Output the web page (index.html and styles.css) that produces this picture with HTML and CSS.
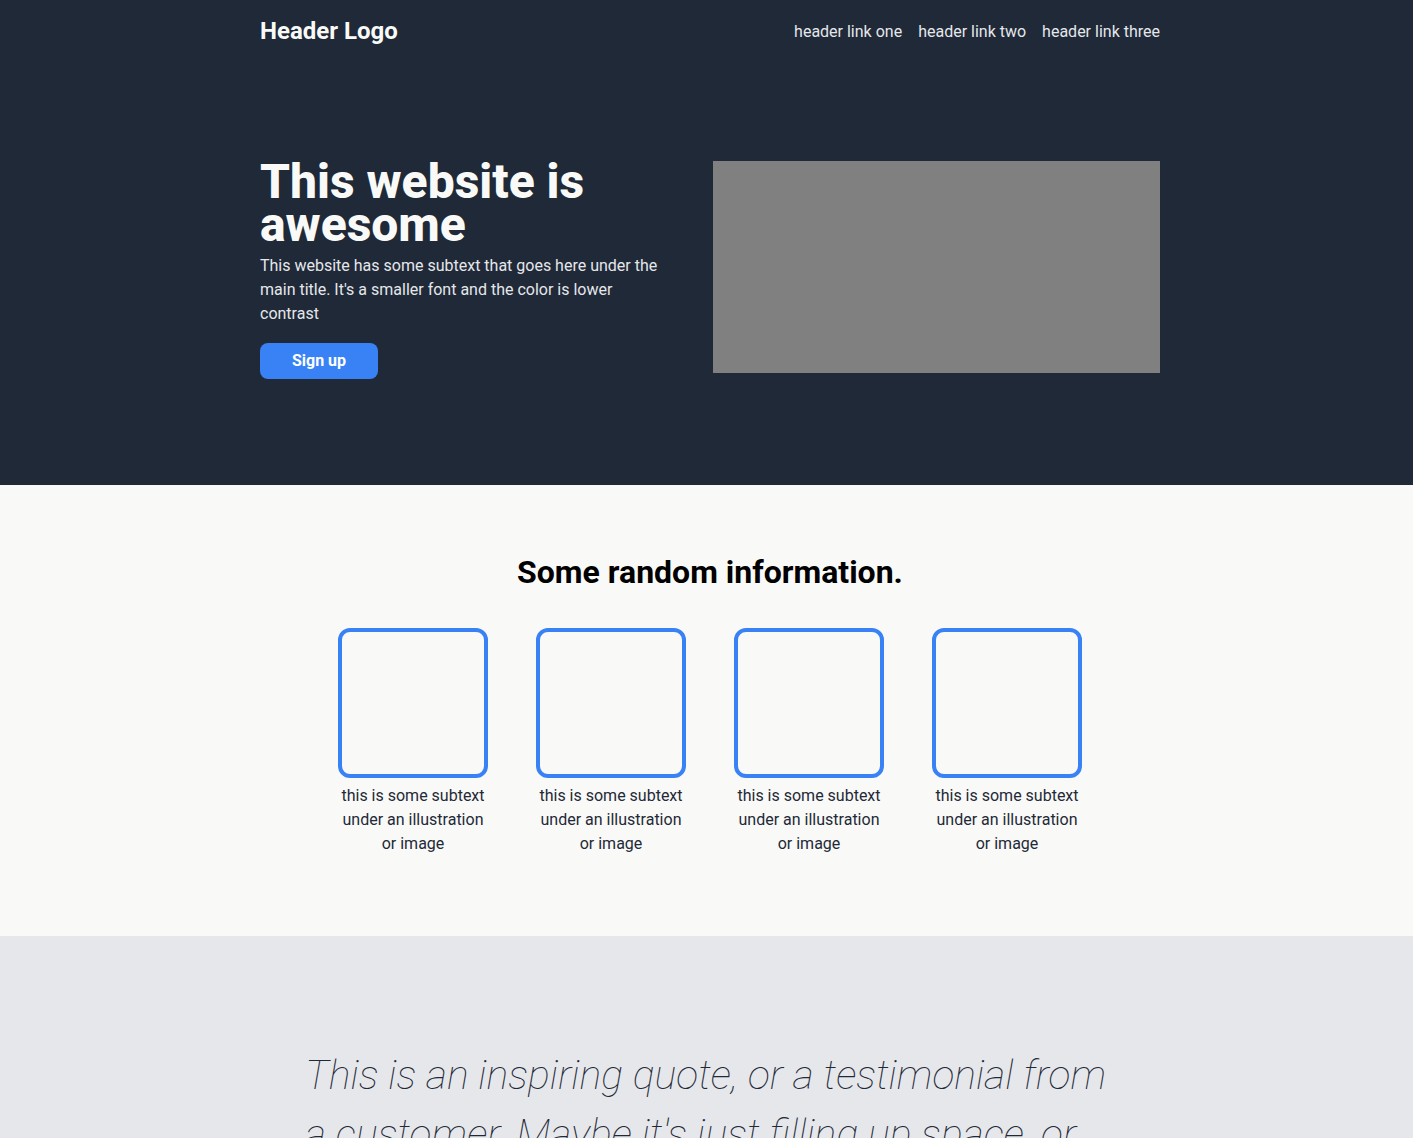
FILE: index.html
```html
<!DOCTYPE html>
<html lang="en">
<head>
<meta charset="utf-8">
<title>Landing Page</title>
<link rel="stylesheet" href="styles.css">
</head>
<body>
  <section class="hero">
    <div class="container">
      <header class="header">
        <div class="logo">Header Logo</div>
        <nav class="links">
          <a href="#">header link one</a>
          <a href="#">header link two</a>
          <a href="#">header link three</a>
        </nav>
      </header>
      <div class="hero-main">
        <div class="hero-text">
          <h1 class="hero-title">This website is awesome</h1>
          <p class="hero-sub">This website has some subtext that goes here under the main title. It's a smaller font and the color is lower contrast</p>
          <button class="btn">Sign up</button>
        </div>
        <div class="hero-image"></div>
      </div>
    </div>
  </section>

  <section class="info">
    <h2 class="info-title">Some random information.</h2>
    <div class="cards">
      <div class="card">
        <div class="card-box"></div>
        <p class="card-text">this is some subtext under an illustration or image</p>
      </div>
      <div class="card">
        <div class="card-box"></div>
        <p class="card-text">this is some subtext under an illustration or image</p>
      </div>
      <div class="card">
        <div class="card-box"></div>
        <p class="card-text">this is some subtext under an illustration or image</p>
      </div>
      <div class="card">
        <div class="card-box"></div>
        <p class="card-text">this is some subtext under an illustration or image</p>
      </div>
    </div>
  </section>

  <section class="quote">
    <div class="container">
      <div class="quote-inner">
        <p class="quote-text">This is an inspiring quote, or a testimonial from a customer. Maybe it's just filling up space, or maybe people will actually read it. Who knows? All I know is that it looks nice.</p>
        <p class="quote-author">-Thor, God of Thunder</p>
      </div>
    </div>
  </section>
</body>
</html>
```

FILE: styles.css
```css
* {
  box-sizing: border-box;
}

html, body {
  margin: 0;
  padding: 0;
}

body {
  font-family: Roboto, "Noto Sans", "Liberation Sans", sans-serif;
  color: #1f2937;
  background: #f9faf8;
}

section {
  padding-left: 7px;
}

.container {
  width: 900px;
  margin: 0 auto;
}

.hero {
  background: #1f2937;
  padding-bottom: 106px;
}

.header {
  display: flex;
  justify-content: space-between;
  align-items: center;
  padding: 17px 0 16px;
}

.logo {
  font-size: 24px;
  font-weight: 700;
  color: #f9faf8;
  line-height: 28px;
}

.links {
  display: flex;
  gap: 16px;
  margin-top: 1px;
}

.links a {
  color: #e5e7eb;
  text-decoration: none;
  font-size: 16px;
}

.hero-main {
  display: flex;
  justify-content: space-between;
  align-items: center;
  margin-top: 99px;
}

.hero-text {
  width: 405px;
}

.hero-title {
  margin: 0;
  font-size: 48px;
  line-height: 0.9;
  font-weight: 800;
  color: #f9faf8;
}

.hero-sub {
  margin: 8px 0 0;
  font-size: 16px;
  line-height: 24px;
  color: #e5e7eb;
}

.btn {
  display: block;
  margin-top: 17px;
  background: #3882f6;
  color: #fff;
  border: none;
  border-radius: 8px;
  font-family: inherit;
  font-size: 16px;
  font-weight: 700;
  line-height: 20px;
  padding: 8px 0;
  width: 118px;
  white-space: nowrap;
  text-align: center;
  cursor: pointer;
}

.hero-image {
  width: 447px;
  height: 212px;
  background: #808080;
  margin-top: -6px;
}

.info {
  background: #f9faf8;
  padding-top: 69px;
  padding-bottom: 80px;
}

.info-title {
  margin: 0;
  text-align: center;
  font-size: 32px;
  font-weight: 700;
  color: #000;
  line-height: 37.5px;
}

.cards {
  display: flex;
  justify-content: center;
  gap: 48px;
  margin-top: 36px;
}

.card {
  width: 150px;
  display: flex;
  flex-direction: column;
  align-items: center;
}

.card-box {
  width: 150px;
  height: 150px;
  border: 4px solid #3882f6;
  border-radius: 12px;
}

.card-text {
  margin: 6px 0 0;
  text-align: center;
  font-size: 16px;
  line-height: 24px;
  color: #1f2937;
}

.quote {
  background: #e5e7eb;
  padding-top: 110px;
  padding-bottom: 110px;
}

.quote-inner {
  padding: 0 38px 0 45px;
}

.quote-text {
  margin: 0;
  font-size: 41px;
  font-weight: 100;
  font-style: italic;
  line-height: 59px;
  color: #1f2937;
}

.quote-author {
  margin: 16px 0 0;
  text-align: right;
  font-size: 24px;
  font-weight: 700;
}
```
